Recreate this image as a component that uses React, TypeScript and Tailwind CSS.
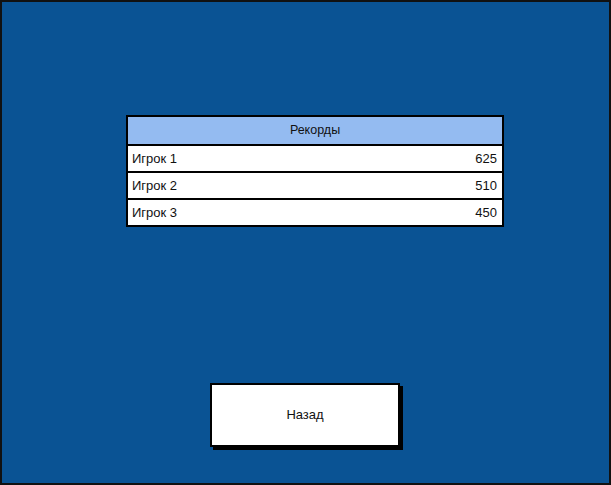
import React from "react";

const rows = [
  { name: "Игрок 1", score: "625" },
  { name: "Игрок 2", score: "510" },
  { name: "Игрок 3", score: "450" },
];

export default function App() {
  return (
    <div
      className="w-[611px] h-[485px] bg-[#0a5394] border-2 border-[#111] flex flex-col text-[#111]"
      style={{ fontFamily: '"Liberation Sans", Arial, sans-serif' }}
    >
      <div className="pt-[113px] pl-[124px]">
        <div className="w-[378px] border-2 border-black bg-black flex flex-col gap-[2px]">
          <div className="h-[27px] bg-[#94bbf1] flex items-center justify-center text-[12.5px]">
            Рекорды
          </div>
          {rows.map((r) => (
            <div
              key={r.name}
              className="h-[25px] bg-white flex items-center justify-between pl-[4px] pr-[5px] text-[13px]"
            >
              <span>{r.name}</span>
              <span>{r.score}</span>
            </div>
          ))}
        </div>
      </div>
      <div className="pt-[156px] pl-[208px]">
        <div className="w-[190px] h-[64px] bg-white border-2 border-black shadow-[3px_3px_0_0_#000] flex items-center justify-center text-[13px]">
          Назад
        </div>
      </div>
    </div>
  );
}
